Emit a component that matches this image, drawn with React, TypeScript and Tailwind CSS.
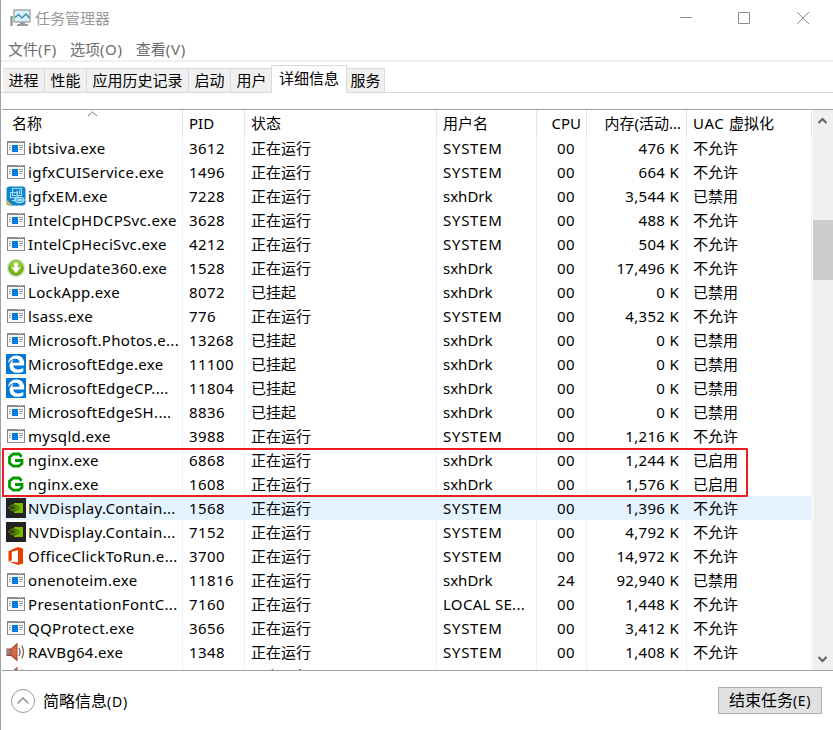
import React from 'react';

type IconKind = 'app' | 'intel' | 'update' | 'edge' | 'nginx' | 'nvidia' | 'office' | 'sound';
type Row = [IconKind, string, string, string, string, string, string, string];

const RUN = '正在运行';
const SUS = '已挂起';
const NO = '不允许';
const OFF = '已禁用';
const ON = '已启用';

const rows: Row[] = [
  ['app', 'ibtsiva.exe', '3612', RUN, 'SYSTEM', '00', '476 K', NO],
  ['app', 'igfxCUIService.exe', '1496', RUN, 'SYSTEM', '00', '664 K', NO],
  ['intel', 'igfxEM.exe', '7228', RUN, 'sxhDrk', '00', '3,544 K', OFF],
  ['app', 'IntelCpHDCPSvc.exe', '3628', RUN, 'SYSTEM', '00', '488 K', NO],
  ['app', 'IntelCpHeciSvc.exe', '4212', RUN, 'SYSTEM', '00', '504 K', NO],
  ['update', 'LiveUpdate360.exe', '1528', RUN, 'sxhDrk', '00', '17,496 K', NO],
  ['app', 'LockApp.exe', '8072', SUS, 'sxhDrk', '00', '0 K', OFF],
  ['app', 'lsass.exe', '776', RUN, 'SYSTEM', '00', '4,352 K', NO],
  ['app', 'Microsoft.Photos.e...', '13268', SUS, 'sxhDrk', '00', '0 K', OFF],
  ['edge', 'MicrosoftEdge.exe', '11100', SUS, 'sxhDrk', '00', '0 K', OFF],
  ['edge', 'MicrosoftEdgeCP....', '11804', SUS, 'sxhDrk', '00', '0 K', OFF],
  ['app', 'MicrosoftEdgeSH....', '8836', SUS, 'sxhDrk', '00', '0 K', OFF],
  ['app', 'mysqld.exe', '3988', RUN, 'SYSTEM', '00', '1,216 K', NO],
  ['nginx', 'nginx.exe', '6868', RUN, 'sxhDrk', '00', '1,244 K', ON],
  ['nginx', 'nginx.exe', '1608', RUN, 'sxhDrk', '00', '1,576 K', ON],
  ['nvidia', 'NVDisplay.Contain...', '1568', RUN, 'SYSTEM', '00', '1,396 K', NO],
  ['nvidia', 'NVDisplay.Contain...', '7152', RUN, 'SYSTEM', '00', '4,792 K', NO],
  ['office', 'OfficeClickToRun.e...', '3700', RUN, 'SYSTEM', '00', '14,972 K', NO],
  ['app', 'onenoteim.exe', '11816', RUN, 'sxhDrk', '24', '92,940 K', OFF],
  ['app', 'PresentationFontC...', '7160', RUN, 'LOCAL SE...', '00', '1,448 K', NO],
  ['app', 'QQProtect.exe', '3656', RUN, 'SYSTEM', '00', '3,412 K', NO],
  ['sound', 'RAVBg64.exe', '1348', RUN, 'SYSTEM', '00', '1,408 K', NO],
];

function ProcessIcon({ kind }: { kind: IconKind }) {
  switch (kind) {
    case 'app':
      return (
        <svg width="20" height="20" viewBox="0 0 20 20" shapeRendering="crispEdges">
          <rect x="1" y="3" width="18" height="14" fill="#858a8e" />
          <rect x="2" y="5" width="16" height="11" fill="#f7f7f7" />
          <path d="M12 3.500h1M14 3.500h1M16 3.500h1" stroke="#d8d8d8" />
          <rect x="6" y="7" width="6" height="7" fill="#0078d7" />
          <path d="M3 7.500h2M3 9.500h2M3 11.500h2M13 7.500h4M13 9.500h4M13 11.500h3" stroke="#9aa0a5" />
        </svg>
      );
    case 'intel':
      return (
        <svg width="20" height="20" viewBox="0 0 20 20">
          <rect x=".5" y=".5" width="19" height="19" rx="3" fill="#0d85cf" />
          <path d="M1 14l5 5H3q-2 0-2-2z" fill="#f0b429" />
          <path d="M6.500 2.500h9v7h-9zM4.500 6.500h7v5h-7zM9 12v2M6 14.500h5M11 4.500v4M13.500 4v4" fill="none" stroke="#a9ddf7" strokeWidth="1.1" />
          <ellipse cx="13.500" cy="14" rx="4.500" ry="2.700" fill="#4bb0e6" stroke="#e2f5ff" />
          <path d="M11 14h1M13 13v2M15 13v2" stroke="#fff" />
        </svg>
      );
    case 'update':
      return (
        <svg width="20" height="20" viewBox="0 0 20 20">
          <circle cx="10" cy="10" r="9.300" fill="#e3e3e1" />
          <circle cx="10" cy="10" r="7.900" fill="#75b51c" />
          <path d="M3 8a7.200 7.200 0 0 1 14 0q-7 4-14 0" fill="#98cb32" />
          <path d="M8.200 4.500h3.600v5h3.200l-5 5.500-5-5.500h3.200z" fill="#fff" />
        </svg>
      );
    case 'edge':
      return (
        <svg width="20" height="20" viewBox="0 0 20 20">
          <rect width="20" height="20" fill="#0078d7" />
          <path d="M2 9.200C2.600 4.600 5.800 1.500 10.300 1.500c5 0 7.900 3.400 7.900 8v2H7.200c.2 2.500 2.400 3.900 5.200 3.900 1.800 0 3.400-.5 4.900-1.400v3.500c-1.700.9-3.600 1.300-5.700 1.300-5 0-8-2.800-8-6.900 0-2.700 1.500-5 4-6.200-.8 1-1.200 2-1.300 3h7.200c0-2.400-1.300-4-3.800-4C6.600 4.700 3.700 6.500 2 9.200z" fill="#fff" />
        </svg>
      );
    case 'nginx':
      return (
        <svg width="20" height="20" viewBox="0 0 20 20">
          <path d="M15.700 6.700L13 4H7.200L3.500 7.200v5.800L7.200 16.200h5.500l3.300-2.700v-3H9" fill="none" stroke="#009900" strokeWidth="2.800" />
        </svg>
      );
    case 'nvidia':
      return (
        <svg width="20" height="20" viewBox="0 0 20 20">
          <rect width="20" height="20" fill="#222" />
          <rect x="8" y="5" width="9" height="10" fill="#76b900" />
          <path d="M2.500 9.800C5 5.800 10 5.800 13.500 10 10 14.200 5.500 13.700 2.500 9.800zM5 9.800c1.500-2.300 4.300-2.100 6.200.2C9 12.300 6.500 12 5 9.800z" fill="none" stroke="#76b900" strokeWidth=".8" />
          <path d="M8 7.200c2 0 3.800 1.200 5.200 2.900-1.500 1.800-3.200 2.800-5.200 2.800M8 9q1.700 0 2.500 1-.9 1.200-2.500 1.200" fill="none" stroke="#223300" strokeWidth=".9" />
        </svg>
      );
    case 'office':
      return (
        <svg width="20" height="20" viewBox="0 0 20 20">
          <path d="M2.500 5L12 1l5 1.600v14.800L12 19l-9.500-3.500 9.500 1V4.200L5.800 5.700v8.600l-3.300 1.200z" fill="#eb3c00" />
        </svg>
      );
    case 'sound':
      return (
        <svg width="20" height="20" viewBox="0 0 20 20">
          <path d="M.5 6.500h4.500L11.500 .5v19L5 14H.5z" fill="#a5482f" />
          <path d="M5.500 7.500L10.500 3v13.500L5.500 12.500z" fill="#d9694a" />
          <path d="M1 7.500h3.500v5H1z" fill="#8f8984" />
          <path d="M13 6q2 4 0 8M15.700 3.500q3.600 6.500 0 13" fill="none" stroke="#7d6a61" strokeWidth="1.400" />
        </svg>
      );
  }
}

function TitleIcon() {
  return (
    <svg width="22" height="18" viewBox="0 0 22 18">
      <path d="M10 12h5v3h3v2H7v-2h3z" fill="#9a9d9f" />
      <rect x="4" y="1" width="16" height="12" fill="#d8eefa" stroke="#a0a4a7" strokeWidth="1.400" />
      <path d="M5 8.500l3.500-3L12 9l4-4 3.500 4" fill="none" stroke="#2186b5" strokeWidth="1.200" />
      <path d="M.5 7h2v10h-2z" fill="#858b8e" />
      <path d="M1 8h2" stroke="#46bb55" strokeWidth="1.500" />
    </svg>
  );
}

function ProcessRow({ row, selected }: { row: Row; selected?: boolean }) {
  const [kind, name, pid, state, user, cpu, mem, uac] = row;
  const cell = 'h-6 shrink-0 border-r border-[#e7f1fc] pl-[6px] whitespace-nowrap overflow-hidden';
  return (
    <div className={'flex h-6 w-[810px] shrink-0 ' + (selected ? 'bg-[#e5f3ff]' : '')}>
      <div className="flex h-6 w-[181px] shrink-0 items-center gap-[2px] overflow-hidden border-r border-[#e7f1fc] pl-[4px] whitespace-nowrap">
        <span className="h-5 w-5 shrink-0"><ProcessIcon kind={kind} /></span>
        <span className="tracking-[0.33px]">{name}</span>
      </div>
      <div className={cell + ' w-[62px] tracking-[0.4px]'}>{pid}</div>
      <div className={cell + ' w-[192px]'}>{state}</div>
      <div className={cell + ' w-[100px] ' + (user === 'SYSTEM' ? 'tracking-[0.7px]' : user === 'sxhDrk' ? 'tracking-[0px]' : 'tracking-[0.3px]')}>{user}</div>
      <div className={cell + ' w-[50px] pr-[11px] text-right tracking-[0.4px]'}>{cpu}</div>
      <div className={cell + ' w-[100px] pr-[7px] text-right tracking-[0.3px]'}>{mem}</div>
      <div className={cell + ' w-[125px]'}>{uac}</div>
    </div>
  );
}

export default function App() {
  const head = 'h-[26px] shrink-0 border-r border-[#e5e5e5] pl-[6px] whitespace-nowrap leading-[27px]';
  const tab = 'flex h-[25px] items-center justify-center border border-l-0 border-[#d9d9d9] bg-[#f0f0f0] pb-px whitespace-nowrap';
  return (
    <div className="relative flex h-[730px] w-[833px] flex-col overflow-hidden border-l border-[#a0a3a6] bg-white font-['Noto_Sans','Noto_Sans_CJK_SC',sans-serif] text-[15px] leading-6 text-black">
      <header className="flex h-9 shrink-0 items-center pl-[9px] text-[#999]">
        <TitleIcon />
        <span className="ml-[3px] grow">任务管理器</span>
        <svg width="160" height="36" viewBox="0 0 160 36" fill="none" stroke="#8d8d8d">
          <path d="M7 17.500h12M65.500 12.500h11v11h-11zM124 12l12 12M136 12l-12 12" />
        </svg>
      </header>
      <nav className="flex h-6 shrink-0 items-center gap-[13px] pl-[7px] leading-[26px] text-[#6d6d6d]">
        <span className="pt-px">文件<span className="tracking-[0.7px]">(F)</span></span>
        <span className="pt-px">选项<span className="tracking-[0.7px]">(O)</span></span>
        <span className="pt-px">查看<span className="tracking-[0.7px]">(V)</span></span>
      </nav>
      <div className="h-[2px] shrink-0 bg-[#f0f0f0]" />
      <div className="flex h-[31px] shrink-0 items-end border-b border-[#d9d9d9] pl-[2px]">
        <div className="-mb-px flex items-end">
          <div className={tab + ' w-[42px] border-l'}>进程</div>
          <div className={tab + ' w-[42px]'}>性能</div>
          <div className={tab + ' w-[102px]'}>应用历史记录</div>
          <div className={tab + ' w-[42px]'}>启动</div>
          <div className={tab + ' w-[41px] pl-px'}>用户</div>
          <div className="-ml-px flex h-[28px] w-[76px] items-center justify-center border border-b-0 border-[#d9d9d9] bg-white pb-[3px] whitespace-nowrap">详细信息</div>
          <div className={tab + ' w-[38px]'}>服务</div>
        </div>
      </div>
      <div className="h-4 shrink-0" />
      <main className="ml-px flex h-[562px] shrink-0 border-y border-[#a0a0a0]">
        <div className="relative flex h-[560px] w-[811px] flex-col overflow-hidden">
          <div className="flex h-[26px] shrink-0">
            <div className={head + ' w-[181px] pl-[10px]'}>名称</div>
            <div className={head + ' w-[62px]'}>PID</div>
            <div className={head + ' w-[192px]'}>状态</div>
            <div className={head + ' w-[100px]'}>用户名</div>
            <div className={head + ' w-[50px] pr-[5px] text-right'}>CPU</div>
            <div className={head + ' w-[100px] pr-[5px] text-right'}>内存(活动...</div>
            <div className={head + ' w-[125px]'}><span className="tracking-[0.6px]">UAC </span>虚拟化</div>
          </div>
          <svg className="absolute top-[1px] left-[85px]" width="11" height="6" viewBox="0 0 11 6">
            <path d="M1 5l4.500-4L10 5" fill="none" stroke="#777" />
          </svg>
          {rows.map((row, i) => <ProcessRow key={i} row={row} selected={i === 15} />)}
          <ProcessRow row={['sound', '', '', RUN, '', '', '', '']} />
        </div>
        <div className="flex h-[560px] w-5 shrink-0 flex-col items-center bg-[#f0f0f0]">
          <svg width="20" height="20" viewBox="0 0 20 20" fill="none" stroke="#606060" strokeWidth="2">
            <path d="M5.500 13l4-4 4 4" />
          </svg>
          <div className="mt-[90px] h-[60px] w-full bg-[#cdcdcd]" />
          <div className="grow" />
          <svg width="20" height="20" viewBox="0 0 20 20" fill="none" stroke="#606060" strokeWidth="2">
            <path d="M5.500 7l4 4 4-4" />
          </svg>
        </div>
      </main>
      <footer className="flex h-[59px] shrink-0 items-center pr-[11px] pl-[9px]">
        <svg width="26" height="26" viewBox="0 0 26 26" fill="none">
          <circle cx="13" cy="13" r="11.500" stroke="#999" />
          <path d="M7.500 15.500L13 10l5.500 5.500" stroke="#999" strokeWidth="1.700" />
        </svg>
        <span className="ml-[7px] grow pt-px text-[16px]">简略信息<span className="text-[14px] tracking-[0.8px]">(D)</span></span>
        <button className="h-[27px] w-[104px] border border-[#adadad] bg-[#e1e1e1] text-[16px] leading-[25px] whitespace-nowrap">结束任务<span className="text-[14px] tracking-[0.6px]">(E)</span></button>
      </footer>
      <div className="pointer-events-none absolute top-[448px] left-[1px] h-[49px] w-[746px] rounded-[1px] border-2 border-[#f01c1f]" />
    </div>
  );
}
